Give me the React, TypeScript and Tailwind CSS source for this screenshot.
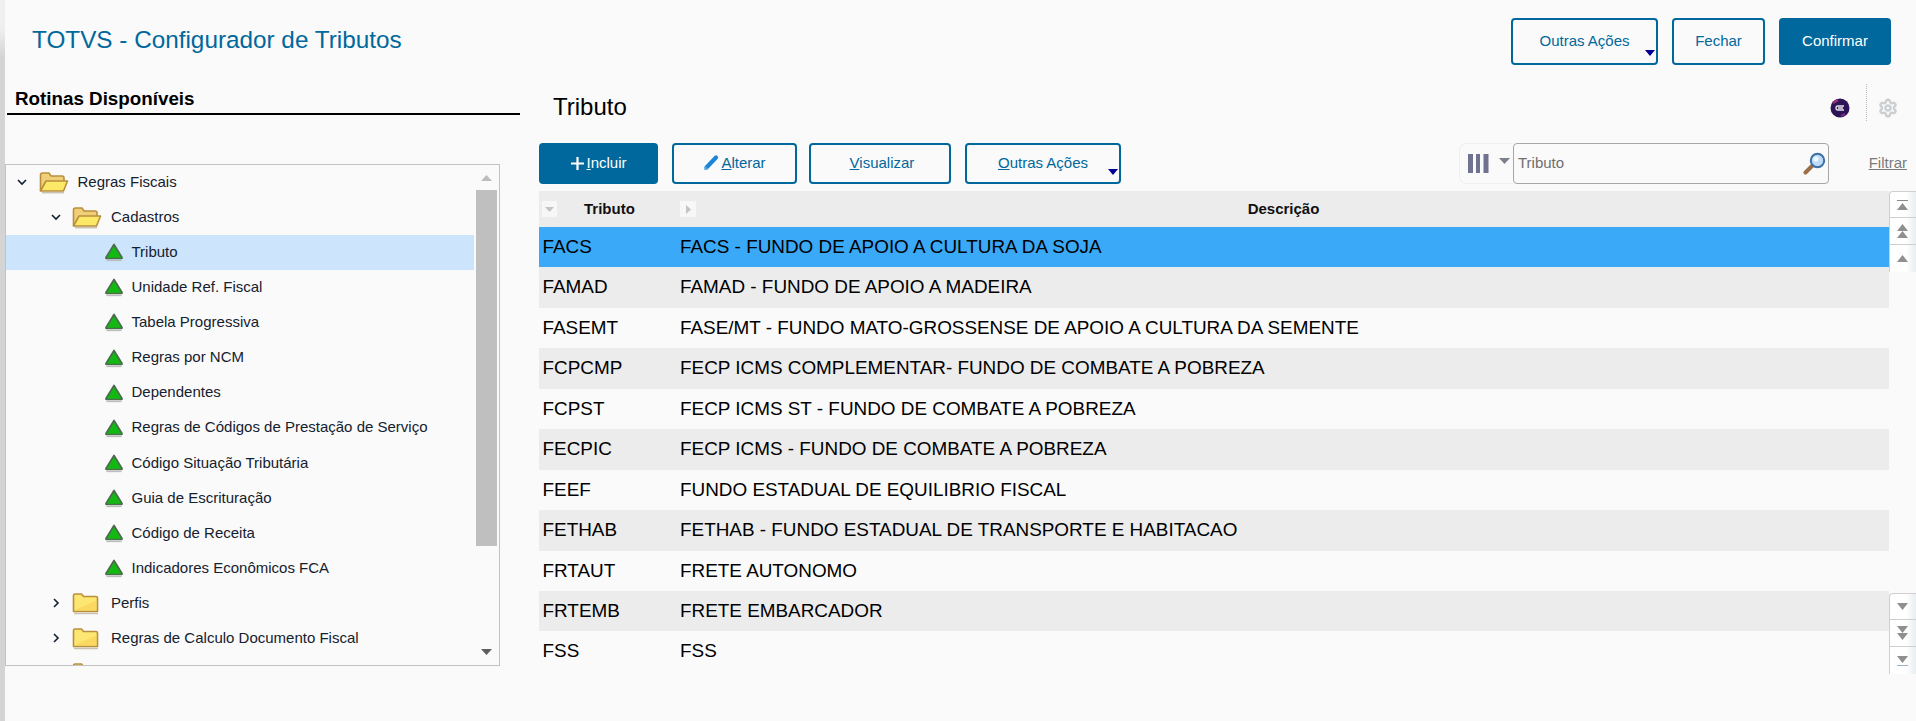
import { Settings } from "lucide-react";

const routines = [
  "Tributo",
  "Unidade Ref. Fiscal",
  "Tabela Progressiva",
  "Regras por NCM",
  "Dependentes",
  "Regras de Códigos de Prestação de Serviço",
  "Código Situação Tributária",
  "Guia de Escrituração",
  "Código de Receita",
  "Indicadores Econômicos FCA",
];

const rows = [
  ["FACS", "FACS - FUNDO DE APOIO A CULTURA DA SOJA"],
  ["FAMAD", "FAMAD - FUNDO DE APOIO A MADEIRA"],
  ["FASEMT", "FASE/MT - FUNDO MATO-GROSSENSE DE APOIO A CULTURA DA SEMENTE"],
  ["FCPCMP", "FECP ICMS COMPLEMENTAR- FUNDO DE COMBATE A POBREZA"],
  ["FCPST", "FECP ICMS ST - FUNDO DE COMBATE A POBREZA"],
  ["FECPIC", "FECP ICMS - FUNDO DE COMBATE A POBREZA"],
  ["FEEF", "FUNDO ESTADUAL DE EQUILIBRIO FISCAL"],
  ["FETHAB", "FETHAB - FUNDO ESTADUAL DE TRANSPORTE E HABITACAO"],
  ["FRTAUT", "FRETE AUTONOMO"],
  ["FRTEMB", "FRETE EMBARCADOR"],
  ["FSS", "FSS"],
];

function OpenFolder() {
  return (
    <svg width="30" height="24" viewBox="0 0 30 24" className="shrink-0">
      <path d="M1.500 21 L1.500 5 Q1.500 3 3.500 3 L10 3 L12 6 L23 6 Q25 6 25 8 L25 11" fill="#f0cf78" stroke="#b98f3e" strokeWidth="1.600" />
      <path d="M1.500 21 L7 11 L28.500 11 L24.500 21 Z" fill="#fde968" stroke="#b98f3e" strokeWidth="1.600" strokeLinejoin="round" />
      <path d="M3 22.700 L25 22.700" stroke="#c9c2b2" strokeWidth="1.500" />
    </svg>
  );
}

function ClosedFolder() {
  return (
    <svg width="27" height="24" viewBox="0 0 27 24" className="shrink-0">
      <path d="M1.500 20.500 L1.500 4.500 Q1.500 3 3 3 L9.500 3 L11.500 5.500 L24 5.500 Q25.500 5.500 25.500 7 L25.500 20.500 Z" fill="#fde772" stroke="#b98f3e" strokeWidth="1.600" strokeLinejoin="round" />
      <path d="M3 19 L24 9.500 L24 19 Z" fill="#fbd960" />
      <path d="M2 22.500 L26 22.500" stroke="#c9c2b2" strokeWidth="1.500" />
    </svg>
  );
}

function GreenMark() {
  return (
    <svg width="20" height="20" viewBox="0 0 20 20" className="shrink-0">
      <path d="M10 2.500 L18 15.500 Q18.400 16.500 17 16.500 L3 16.500 Q1.600 16.500 2 15.500 Z" fill="#12b912" stroke="#4d6b4d" strokeWidth="1.700" strokeLinejoin="round" />
      <path d="M2.500 18.500 L17.500 18.500" stroke="#bdbdbd" strokeWidth="1.300" />
    </svg>
  );
}

function Chevron({ open }: { open: boolean }) {
  return (
    <svg width="10" height="10" viewBox="0 0 10 10" className="shrink-0">
      <path d={open ? "M1 3 L5 7 L9 3" : "M3 1 L7 5 L3 9"} fill="none" stroke="#102030" strokeWidth="1.600" />
    </svg>
  );
}

function Caret({ color = "#888", up = false, w = 10, h = 6 }: { color?: string; up?: boolean; w?: number; h?: number }) {
  return (
    <svg width={w} height={h} viewBox="0 0 10 6" preserveAspectRatio="none" className="block shrink-0">
      <path d={up ? "M0 6 L5 0 L10 6 Z" : "M0 0 L10 0 L5 6 Z"} fill={color} />
    </svg>
  );
}

function TreeRow({ indent, children }: { indent: string; children: React.ReactNode }) {
  return <div className={`flex h-[35.100px] items-center pb-[1px] text-[15px] text-[#14212e] ${indent}`}>{children}</div>;
}

function Tree() {
  return (
    <div className="mt-[49px] flex h-[502px] w-[495px] overflow-hidden border border-[#c2c2c2]">
      <div className="w-[468px] shrink-0">
        <TreeRow indent="pl-[11px]">
          <Chevron open />
          <span className="ml-[12px] mr-[8.500px] flex"><OpenFolder /></span>
          Regras Fiscais
        </TreeRow>
        <TreeRow indent="pl-[45px]">
          <Chevron open />
          <span className="ml-[11px] mr-[9px] flex"><OpenFolder /></span>
          Cadastros
        </TreeRow>
        {routines.map((name, i) => (
          <TreeRow key={name} indent={i === 0 ? "pl-[98px] bg-[#cce5fd]" : "pl-[98px]"}>
            <span className="mr-[7.500px] flex"><GreenMark /></span>
            {name}
          </TreeRow>
        ))}
        <TreeRow indent="pl-[45px]">
          <Chevron open={false} />
          <span className="ml-[11px] mr-[12px] flex"><ClosedFolder /></span>
          Perfis
        </TreeRow>
        <TreeRow indent="pl-[45px]">
          <Chevron open={false} />
          <span className="ml-[11px] mr-[12px] flex"><ClosedFolder /></span>
          Regras de Calculo Documento Fiscal
        </TreeRow>
        <TreeRow indent="pl-[66px]">
          <ClosedFolder />
        </TreeRow>
      </div>
      <div className="flex flex-1 flex-col items-center pt-[10px]">
        <Caret color="#bdbdbd" up w={11} h={6} />
        <div className="mt-[9px] h-[356px] w-[21px] bg-[#bfbfbf]" />
        <div className="mt-[103px]">
          <Caret color="#5e5e5e" w={11} h={6} />
        </div>
      </div>
    </div>
  );
}

function OutlineButton({ className, children }: { className: string; children: React.ReactNode }) {
  return (
    <button className={`relative flex items-center justify-center rounded-[4px] border-2 border-[#00689c] bg-transparent text-[15px] text-[#00689c] ${className}`}>
      {children}
    </button>
  );
}

function DropCaret() {
  return (
    <span className="absolute right-[1px] bottom-[7px]">
      <Caret color="#000099" w={10} h={6} />
    </span>
  );
}

function Toolbar() {
  return (
    <div className="flex h-[41px] items-stretch">
      <button className="flex w-[119px] items-center justify-center rounded-[4px] bg-[#00689c] text-[15px] text-white">
        <svg width="15" height="15" viewBox="0 0 15 15" className="mr-[1px] mb-[1px]">
          <path d="M7.500 1 V14 M1 7.500 H14" stroke="#fff" strokeWidth="2.200" />
        </svg>
        <span><u>I</u>ncluir</span>
      </button>
      <OutlineButton className="ml-[14px] w-[125px]">
        <svg width="16" height="17" viewBox="0 0 16 17" className="mr-[2px] mb-[2px]">
          <path d="M3.500 13.500 L13 3.500" stroke="#1b86d6" strokeWidth="4.200" strokeLinecap="round" />
          <path d="M1 16 L2 12 L5 15 Z" fill="#5aa8e0" />
        </svg>
        <span><u>A</u>lterar</span>
      </OutlineButton>
      <OutlineButton className="ml-[12px] w-[142px] pl-[4px]">
        <span><u>V</u>isualizar</span>
      </OutlineButton>
      <OutlineButton className="ml-[14px] w-[156px]">
        <span><u>O</u>utras Ações</span>
        <DropCaret />
      </OutlineButton>
      <div className="flex-1" />
      <div className="flex w-[54px] items-center rounded-l-[8px] border border-r-0 border-[#efefef] pl-[8px]">
        <svg width="21" height="19" viewBox="0 0 21 19" className="shrink-0">
          <path d="M0 0 H5 V19 H0 Z M8 0 H12 V19 H8 Z M15.500 0 H20.500 V19 H15.500 Z" fill="#6f7390" />
        </svg>
        <span className="ml-[10px] mb-[5px]"><Caret color="#7d7f8c" w={11} h={6} /></span>
      </div>
      <div className="flex w-[316px] items-center justify-between rounded-[4px] border border-[#a6a6a6] pl-[4px] pr-[2px] text-[15px] text-[#6f6f6f]">
        Tributo
        <svg width="23" height="23" viewBox="0 0 23 23">
          <path d="M2.500 20.500 L9.500 13.500" stroke="#9a6f45" strokeWidth="4" strokeLinecap="round" />
          <circle cx="14.500" cy="8.500" r="6.700" fill="#bcdcf7" stroke="#3d6ea5" strokeWidth="2" />
          <circle cx="13" cy="7" r="2.600" fill="#eef7ff" />
        </svg>
      </div>
      <div className="flex w-[87px] items-center justify-end pr-[9px] text-[15px] text-[#7a7a7a] underline">
        Filtrar
      </div>
    </div>
  );
}

function SideButton({ children, last = false, first = false }: { children: React.ReactNode; last?: boolean; first?: boolean }) {
  return (
    <div className={`flex h-[27px] flex-col items-center justify-center border-l border-[#cfcfcf] bg-gradient-to-r from-white from-60% to-[#e9eef0] pr-[2px] ${last ? "" : "border-b"} ${first ? "rounded-tl-[4px] border-t" : ""}`}>
      {children}
    </div>
  );
}

function SidePager() {
  return (
    <div className="flex h-[483px] w-[27px] shrink-0 flex-col justify-between">
      <div className="flex flex-col">
        <SideButton first>
          <div className="mb-[2px] h-[1px] w-[11px] bg-[#8a8a8a]" />
          <Caret color="#8f8f8f" up w={11} h={7} />
        </SideButton>
        <SideButton>
          <Caret color="#8f8f8f" up w={11} h={7} />
          <Caret color="#8f8f8f" up w={11} h={7} />
        </SideButton>
        <SideButton last>
          <Caret color="#8f8f8f" up w={11} h={7} />
        </SideButton>
      </div>
      <div className="flex flex-col">
        <SideButton first>
          <Caret color="#8f8f8f" w={11} h={7} />
        </SideButton>
        <SideButton>
          <Caret color="#8f8f8f" w={11} h={7} />
          <Caret color="#8f8f8f" w={11} h={7} />
        </SideButton>
        <SideButton last>
          <Caret color="#8f8f8f" w={11} h={7} />
          <div className="mt-[2px] h-[1px] w-[11px] bg-[#9fb0c0]" />
        </SideButton>
      </div>
    </div>
  );
}

function Grid() {
  return (
    <div className="mt-[7px] flex">
      <div className="min-w-0 flex-1">
        <div className="flex h-[36px] items-center bg-[#ececec] text-[15px] font-bold text-[#111]">
          <div className="flex w-[141px] items-center pl-[3px]">
            <span className="flex h-[16px] w-[15px] items-center justify-center bg-[#f7f7f7]">
              <Caret color="#c4c4c4" w={9} h={5} />
            </span>
            <span className="ml-[27px]">Tributo</span>
          </div>
          <span className="flex h-[16px] w-[16px] items-center justify-center bg-[#f7f7f7]">
            <svg width="5" height="9" viewBox="0 0 5 9"><path d="M0 0 L5 4.500 L0 9 Z" fill="#c4c4c4" /></svg>
          </span>
          <span className="flex-1 pr-[18px] text-center">Descrição</span>
        </div>
        {rows.map(([code, desc], i) => (
          <div
            key={code}
            className={`flex h-[40.450px] items-center text-[18.900px] text-black ${i === 0 ? "bg-[#3aa9f8]" : i % 2 === 1 ? "bg-[#ececec]" : ""}`}
          >
            <span className="w-[141px] shrink-0 pl-[3.500px]">{code}</span>
            <span>{desc}</span>
          </div>
        ))}
      </div>
      <SidePager />
    </div>
  );
}

export default function App() {
  return (
    <div
      className="flex h-screen overflow-hidden bg-[#fafafa]"
      style={{ fontFamily: '"Liberation Sans", Arial, sans-serif' }}
    >
      <div className="w-[5px] shrink-0 bg-gradient-to-b from-[#efefef] from-[4%] to-[#d4d4d4] to-[8%]" />
      <div className="flex min-w-0 flex-1 flex-col">
        {/* Title bar */}
        <header className="flex h-[65px] shrink-0 items-end justify-between pl-[27px] pr-[25px]">
          <h1 className="pb-[9px] text-[24.300px] leading-[32px] font-normal text-[#00689c]">
            TOTVS - Configurador de Tributos
          </h1>
          <div className="flex h-[47px] items-stretch">
            <OutlineButton className="w-[147px]">
              Outras Ações
              <DropCaret />
            </OutlineButton>
            <OutlineButton className="ml-[14px] w-[93px]">Fechar</OutlineButton>
            <button className="ml-[14px] w-[112px] rounded-[4px] bg-[#00689c] text-[15px] text-white">
              Confirmar
            </button>
          </div>
        </header>

        <div className="flex min-h-0 flex-1">
          {/* Routine tree */}
          <aside className="mr-[19px] w-[515px] shrink-0 pt-[22px]">
            <div className="ml-[2px] border-b-2 border-black pb-[2px] pl-[8px] text-[18.800px] leading-[24px] font-bold text-black">
              Rotinas Disponíveis
            </div>
            <Tree />
          </aside>

          {/* Tax grid */}
          <main className="min-w-0 flex-1">
            <div className="flex h-[78px] items-start justify-between pl-[14px]">
              <h2 className="mt-[24px] text-[24px] leading-[36px] font-normal text-black">Tributo</h2>
              <div className="mt-[19px] flex h-[37px] items-start">
                <svg width="20" height="20" viewBox="0 0 20 20" className="mt-[14px]">
                  <circle cx="10" cy="10" r="9.500" fill="#2c1457" />
                  <path d="M3 5 L8 2" stroke="#9a2a7c" strokeWidth="2.500" />
                  <path d="M15 16 L11 18" stroke="#7a2a80" strokeWidth="2" />
                  <path d="M14 8 H8 Q6 8 6 10 Q6 12 8 12 H14 M8 10 H13" fill="none" stroke="#e8e4f0" strokeWidth="1.300" />
                </svg>
                <div className="ml-[16px] mr-[11px] h-[37px] border-l border-dotted border-[#bdbdbd]" />
                <Settings size={20} strokeWidth={3} color="#cdd0d3" className="mt-[14px] mr-[18px]" />
              </div>
            </div>
            <Toolbar />
            <Grid />
          </main>
        </div>
      </div>
    </div>
  );
}
